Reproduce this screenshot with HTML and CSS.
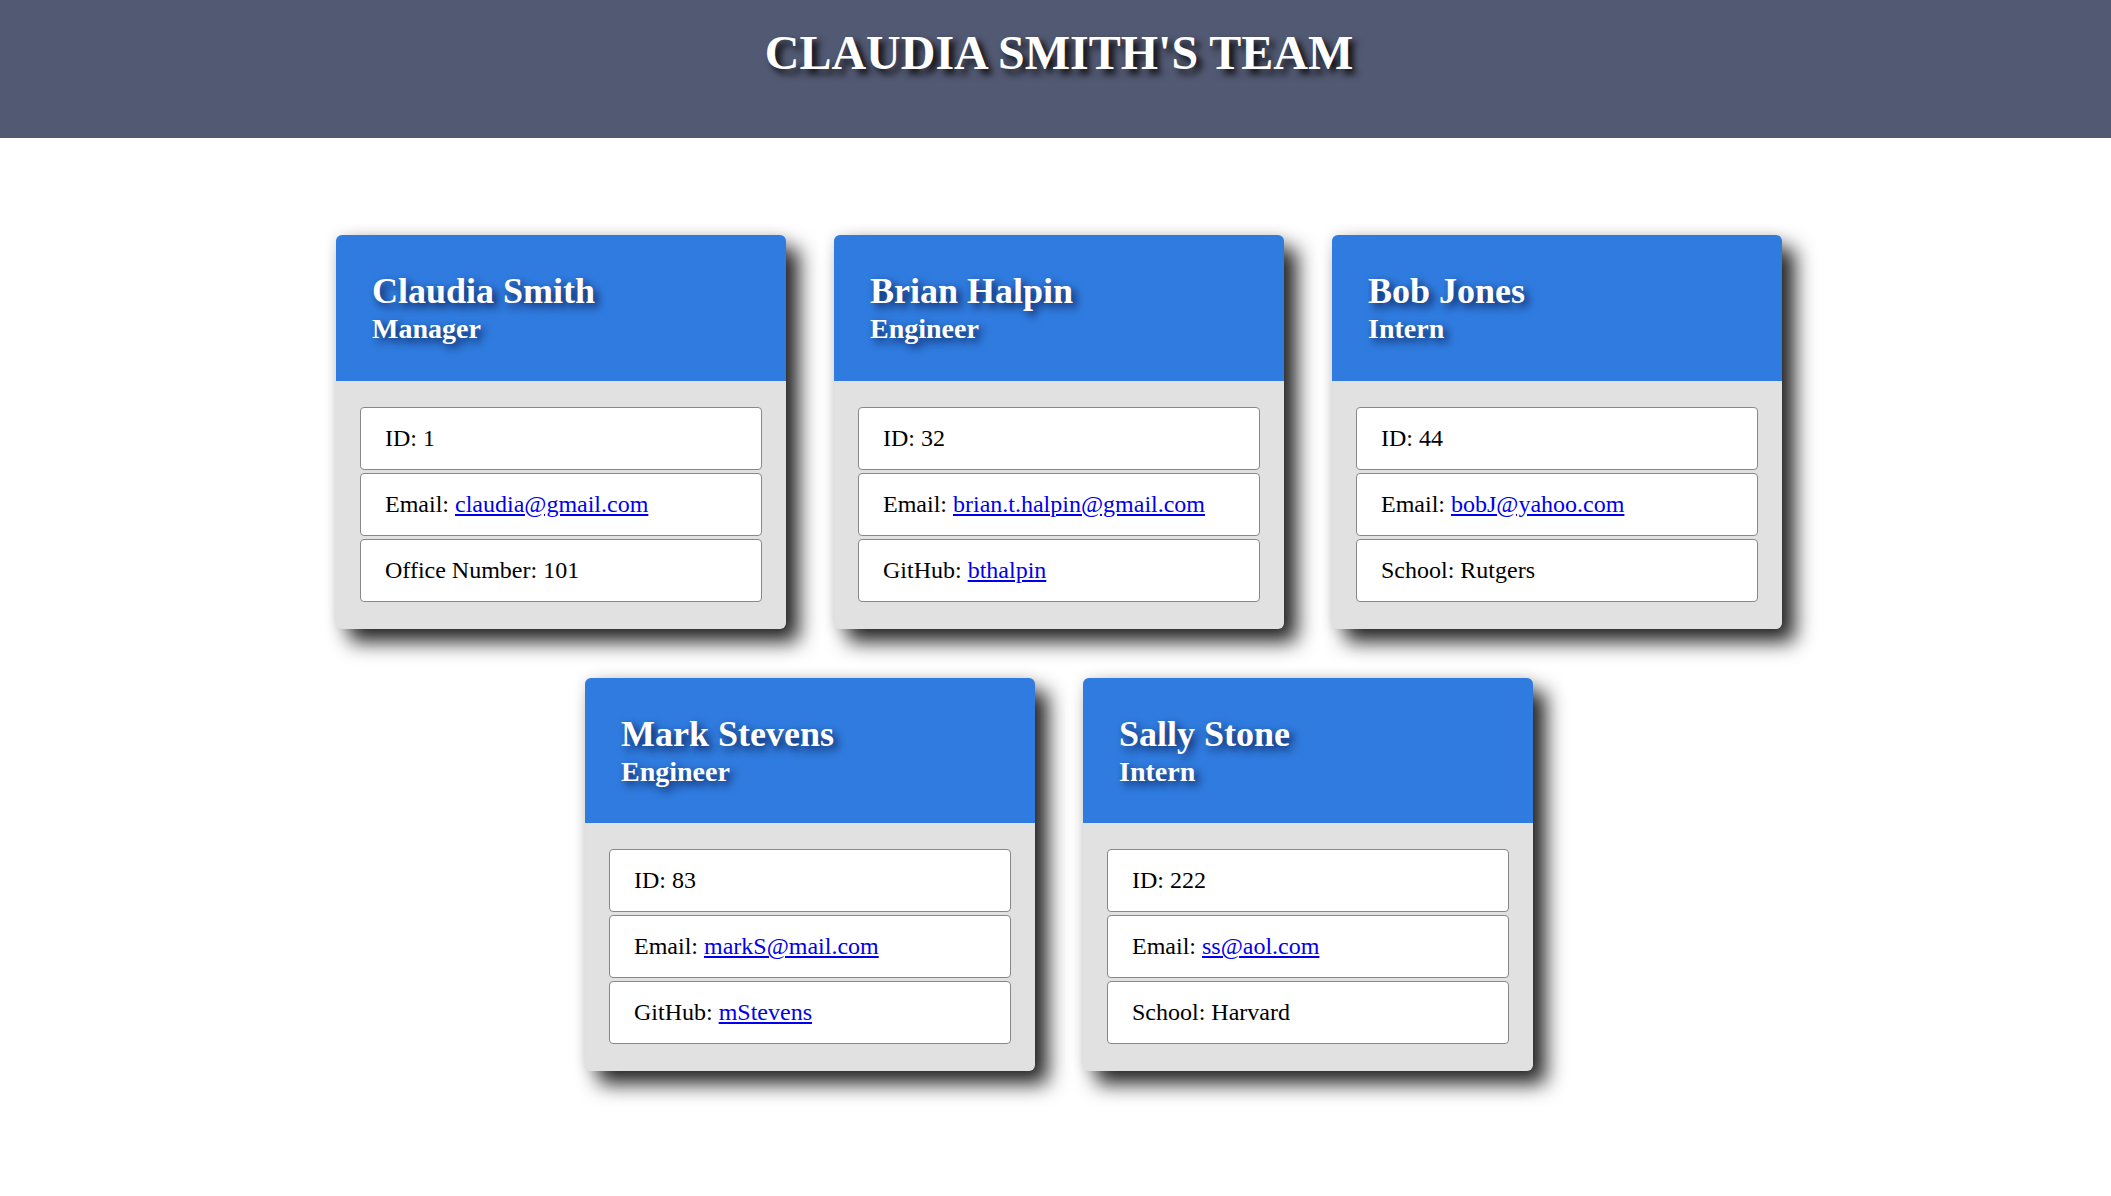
FILE: index.html
```html
<!DOCTYPE html>
<html lang="en">
<head>
<meta charset="UTF-8">
<title>Claudia Smith's Team</title>
<link rel="stylesheet" href="styles.css">
</head>
<body>
<header class="banner">
  <h1 class="banner-title">CLAUDIA SMITH'S TEAM</h1>
</header>
<main class="team">
  <div class="card">
    <div class="card-head">
      <h2 class="card-name">Claudia Smith</h2>
      <h3 class="card-role">Manager</h3>
    </div>
    <div class="card-body">
      <ul class="info">
        <li class="info-item">ID: 1</li>
        <li class="info-item">Email: <a href="mailto:claudia@gmail.com">claudia@gmail.com</a></li>
        <li class="info-item">Office Number: 101</li>
      </ul>
    </div>
  </div>
  <div class="card">
    <div class="card-head">
      <h2 class="card-name">Brian Halpin</h2>
      <h3 class="card-role">Engineer</h3>
    </div>
    <div class="card-body">
      <ul class="info">
        <li class="info-item">ID: 32</li>
        <li class="info-item">Email: <a href="mailto:brian.t.halpin@gmail.com">brian.t.halpin@gmail.com</a></li>
        <li class="info-item">GitHub: <a href="#">bthalpin</a></li>
      </ul>
    </div>
  </div>
  <div class="card">
    <div class="card-head">
      <h2 class="card-name">Bob Jones</h2>
      <h3 class="card-role">Intern</h3>
    </div>
    <div class="card-body">
      <ul class="info">
        <li class="info-item">ID: 44</li>
        <li class="info-item">Email: <a href="mailto:bobJ@yahoo.com">bobJ@yahoo.com</a></li>
        <li class="info-item">School: Rutgers</li>
      </ul>
    </div>
  </div>
  <div class="card">
    <div class="card-head">
      <h2 class="card-name">Mark Stevens</h2>
      <h3 class="card-role">Engineer</h3>
    </div>
    <div class="card-body">
      <ul class="info">
        <li class="info-item">ID: 83</li>
        <li class="info-item">Email: <a href="mailto:markS@mail.com">markS@mail.com</a></li>
        <li class="info-item">GitHub: <a href="#">mStevens</a></li>
      </ul>
    </div>
  </div>
  <div class="card">
    <div class="card-head">
      <h2 class="card-name">Sally Stone</h2>
      <h3 class="card-role">Intern</h3>
    </div>
    <div class="card-body">
      <ul class="info">
        <li class="info-item">ID: 222</li>
        <li class="info-item">Email: <a href="mailto:ss@aol.com">ss@aol.com</a></li>
        <li class="info-item">School: Harvard</li>
      </ul>
    </div>
  </div>
</main>
</body>
</html>
```
FILE: styles.css
```css
* { box-sizing: border-box; }

body {
  margin: 0;
  font-family: "Liberation Serif", "Times New Roman", serif;
  color: #000;
  background: #fff;
}

.banner {
  height: 138px;
  padding: 24px 0 0 7px;
  background: #525972;
  text-align: center;
}

.banner-title {
  margin: 0;
  font-size: 48px;
  line-height: 1.2;
  font-weight: bold;
  color: #fff;
  text-shadow: 5px 5px 7px rgba(0, 0, 0, 0.9);
}

.team {
  max-width: 1460px;
  margin: 97px auto 60px;
  padding-left: 7px;
  display: flex;
  flex-wrap: wrap;
  justify-content: center;
  gap: 49px 48px;
}

.card {
  width: 450px;
  border-radius: 6px;
  overflow: hidden;
  background: #e1e1e1;
  box-shadow: 0 0 14px rgba(0, 0, 0, 0.12), 13px 13px 20px rgba(0, 0, 0, 0.85);
}

.card-head {
  background: #2f7bdf;
  padding: 36px 36px 35px;
  color: #fff;
}

.card-name {
  margin: 0;
  font-size: 36px;
  line-height: 41px;
  font-weight: bold;
  text-shadow: 4px 4px 8px rgba(0, 0, 40, 0.75);
}

.card-role {
  margin: 0;
  font-size: 28px;
  line-height: 1.2;
  font-weight: bold;
  text-shadow: 4px 4px 8px rgba(0, 0, 40, 0.75);
}

.card-body {
  padding: 26px 24px 27px;
}

.info {
  list-style: none;
  margin: 0;
  padding: 0;
  display: flex;
  flex-direction: column;
  gap: 3px;
}

.info-item {
  background: #fff;
  border: 1px solid #888;
  border-radius: 4px;
  padding: 16px 24px;
  font-size: 24px;
  line-height: 29px;
}

.info-item a {
  color: #0000ee;
  text-decoration: underline;
}
```
